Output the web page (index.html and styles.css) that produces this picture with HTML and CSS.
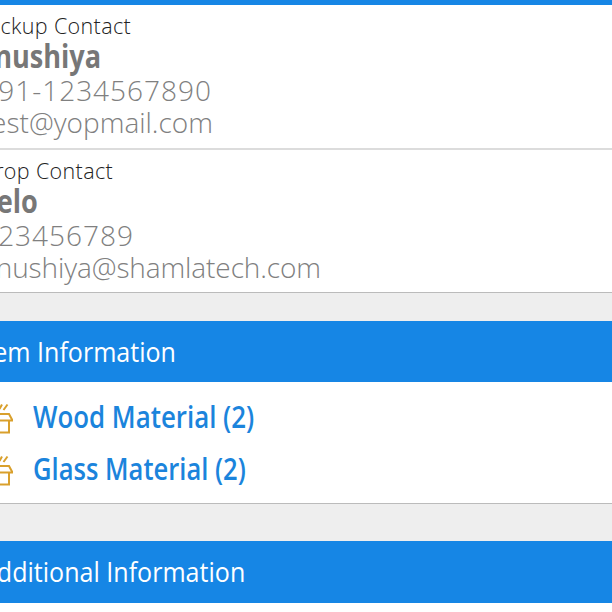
FILE: index.html
```
<!DOCTYPE html>
<html lang="en">
<head>
<meta charset="utf-8">
<title>Delivery details</title>
<link rel="stylesheet" href="styles.css">
</head>
<body>
<svg class="symbols" width="0" height="0" aria-hidden="true">
  <symbol id="box" viewBox="0 0 33 34">
    <path d="M4 20v12.500h25V20M5 14h24l3.500 6.500H19l-2.500-6.500M5 14L1 20.500h12.500l3-6.500M19.500 9l2.500-4.500M23.500 10l4-5.500"/>
  </symbol>
</svg>
<main class="page">
  <div class="topbar"></div>
  <section class="contact pickup">
    <h3 class="label"><span>Pickup Contact</span></h3>
    <p class="name"><span>Anushiya</span></p>
    <p class="phone"><span>+91-1234567890</span></p>
    <p class="email"><span>test@yopmail.com</span></p>
  </section>
  <section class="contact drop">
    <h3 class="label"><span>Drop Contact</span></h3>
    <p class="name"><span>Helo</span></p>
    <p class="phone"><span>123456789</span></p>
    <p class="email"><span>anushiya@shamlatech.com</span></p>
  </section>
  <h2 class="heading items-heading"><span>Item Information</span></h2>
  <section class="items">
    <div class="item"><svg class="icon"><use href="#box"/></svg><span class="wood">Wood Material (2)</span></div>
    <div class="item"><svg class="icon"><use href="#box"/></svg><span class="glass">Glass Material (2)</span></div>
  </section>
  <h2 class="heading extra-heading"><span>Additional Information</span></h2>
</main>
</body>
</html>
```
FILE: styles.css
```
* { box-sizing: border-box; }
body { margin: 0; background: #fff; font-family: "Open Sans", "Noto Sans", sans-serif; }
h2, h3, p { margin: 0; font-weight: 400; }
.symbols { display: none; }
.page { width: 612px; height: 612px; overflow: hidden; background: #fff; }
.topbar { height: 5px; background: #1686e5; }
.contact { border-bottom: 2px solid #dcdcdc; padding-top: 6px; }
.pickup { height: 145px; }
.drop { height: 143px; border-bottom: 1px solid #bbb; }
.contact > *, .heading { display: flex; justify-content: flex-end; white-space: nowrap; }
.contact span, .heading span { transform-origin: right center; }
.label { height: 30px; line-height: 30px; font-size: 21.5px; font-weight: 300; letter-spacing: 0.35px; color: #222; }
.name { height: 31px; line-height: 29px; font-size: 31.5px; font-weight: 700; color: #777; }
.name span { transform: scaleX(.86); }
.phone { height: 36px; line-height: 36px; font-size: 28px; font-weight: 300; letter-spacing: 1px; color: #808080; }
.email { height: 30px; line-height: 28px; font-size: 28px; font-weight: 300; letter-spacing: -0.1px; color: #808080; }
.pickup .label { width: 131px; }
.pickup .name { width: 101px; }
.pickup .phone { width: 212px; }
.pickup .email { width: 213px; letter-spacing: 0; }
.drop .label { width: 113px; }
.drop .name { width: 38px; }
.drop .phone { width: 134px; }
.drop .email { width: 321px; }
.heading { height: 61px; line-height: 60px; font-size: 28px; font-weight: 450; color: #fff; background: #1686e5; }
.heading span { transform: scaleX(.895); }
.items-heading { margin-top: 28px; padding-right: 436px; box-shadow: 0 -28px #eee; }
.items { height: 122px; padding-top: 9px; border-bottom: 1px solid #bbb; }
.item { display: flex; height: 52px; align-items: center; white-space: nowrap; color: #1b84dc; font-size: 30px; font-weight: 600; }
.item span { margin: -1px 0 0 20px; transform-origin: left center; }
.wood { transform: scaleX(.862); }
.glass { transform: scaleX(.852); }
.icon { width: 33px; height: 34px; margin-left: -20px; fill: none; stroke: #d9a02c; stroke-width: 2; }
.extra-heading { height: 62px; margin-top: 37px; padding-right: 367px; box-shadow: 0 -37px #eee; }
```
